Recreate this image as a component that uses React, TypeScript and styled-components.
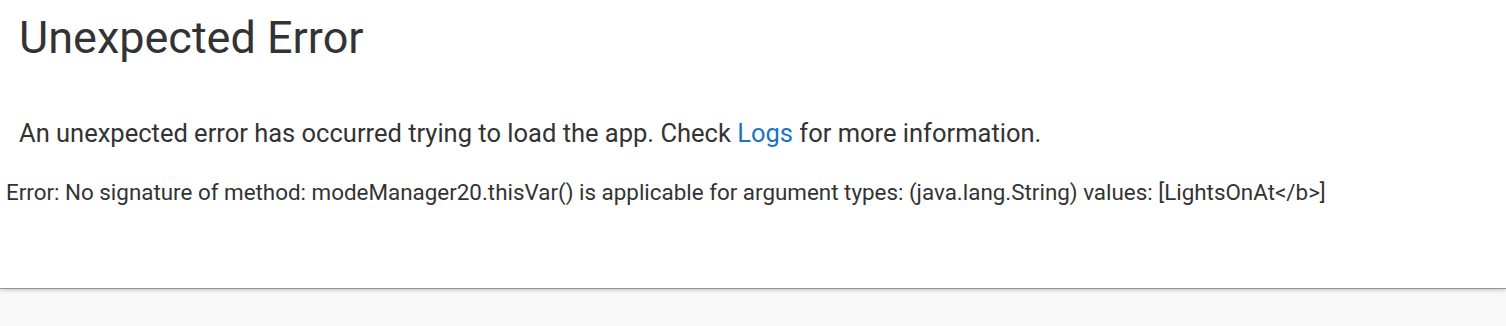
import React from "react";
import styled, { createGlobalStyle } from "styled-components";

const GlobalStyle = createGlobalStyle`
  html, body {
    margin: 0;
    padding: 0;
    background: #f8f8f8;
    font-family: Roboto, "Liberation Sans", sans-serif;
  }
`;

const Main = styled.main`
  background: #ffffff;
  height: 288px;
  border-bottom: 1px solid #949494;
  box-shadow: 0 1px 4px rgba(0, 0, 0, 0.22);
  position: relative;
  display: flex;
  flex-direction: column;
`;

const ErrorPanel = styled.section`
  padding: 12px 0 0 19px;
`;

const Title = styled.h1`
  margin: 0;
  font-size: 45px;
  font-weight: 400;
  line-height: 52px;
  color: #333333;
`;

const Message = styled.p`
  margin: 54px 0 0;
  font-size: 25.5px;
  line-height: 30px;
  color: #333333;

  a {
    color: #1a73c8;
    text-decoration: none;
  }
`;

const Detail = styled.div`
  padding: 31px 0 0 6px;
  font-size: 22.4px;
  line-height: 26px;
  color: #333333;
`;

const Footer = styled.footer`
  height: 37px;
  background: #f8f8f8;
`;

const App: React.FC = () => {
  return (
    <>
      <GlobalStyle />
      <Main>
        <ErrorPanel>
          <Title>Unexpected Error</Title>
          <Message>
            An unexpected error has occurred trying to load the app. Check{" "}
            <a href="#logs">Logs</a> for more information.
          </Message>
        </ErrorPanel>
        <Detail>
          Error: No signature of method: modeManager20.thisVar() is applicable
          for argument types: (java.lang.String) values: [LightsOnAt&lt;/b&gt;]
        </Detail>
      </Main>
      <Footer />
    </>
  );
};

export default App;
